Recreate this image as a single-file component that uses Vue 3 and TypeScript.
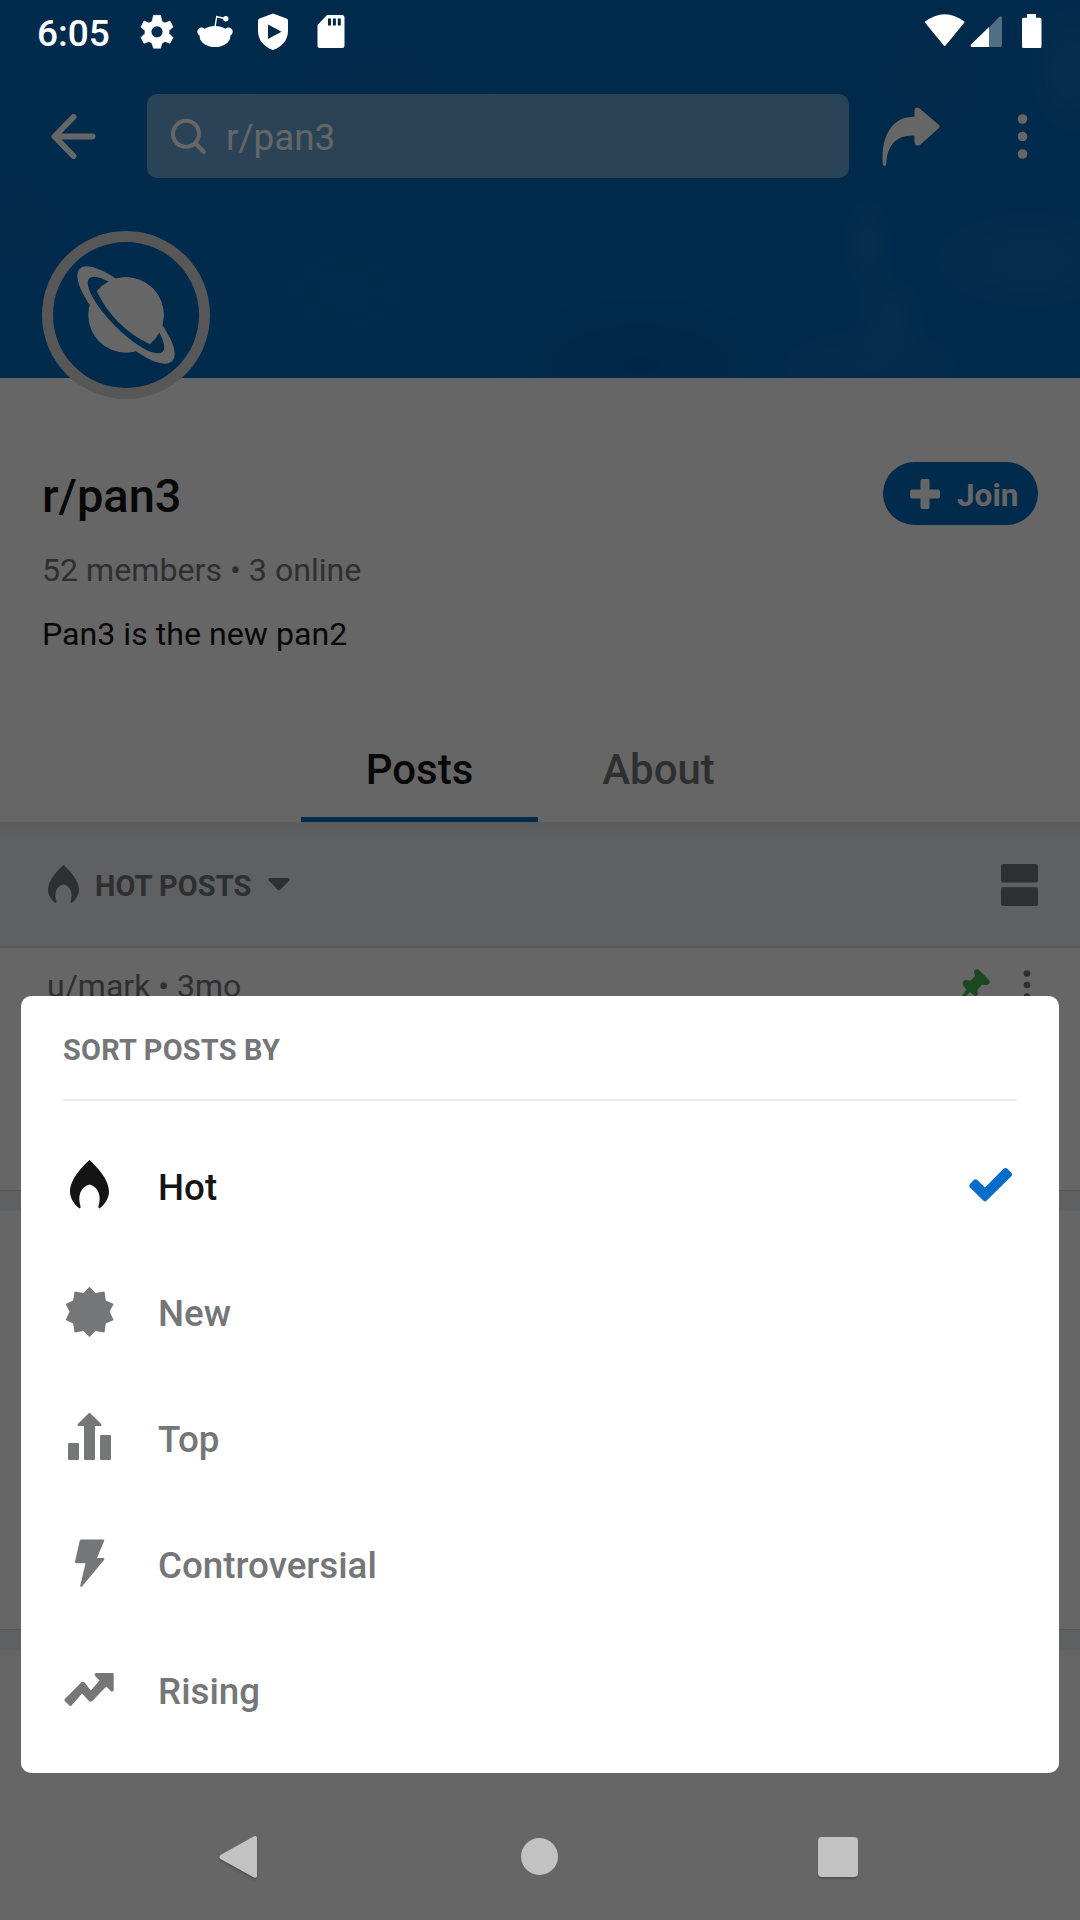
<script setup lang="ts">
import { ref } from 'vue'

interface SortOption {
  id: 'hot' | 'new' | 'top' | 'controversial' | 'rising'
  label: string
  path: string
}

const flame =
  'M26.5 3C33 9 46 22 46 34.500C46 42 41 48 36.500 51.500Q35 51 35.500 49C38.500 40 36 30 26.500 27.500C17 30 14.500 40 17.500 49Q18 51 16.500 51.500C12 48 7 42 7 34.500C7 22 20 9 26.500 3Z'

const options: SortOption[] = [
  { id: 'hot', label: 'Hot', path: flame },
  {
    id: 'new',
    label: 'New',
    path: 'M26.500 1.700L32.500 8L41.500 6.500L42.800 15.500L50.700 19L46.500 26.800L50.700 35L42.800 38.500L41.500 47.500L32.500 46L26.500 52L20.500 46L11.500 47.500L10.200 38.500L2.700 35L6.500 26.800L2.700 19L10.200 15.500L11.500 6.500L20.500 8Z',
  },
  {
    id: 'top',
    label: 'Top',
    path: 'M6.200 32H14.800Q16 32 16 33.200V47.800Q16 49 14.800 49H6.200Q5 49 5 47.800V33.200Q5 32 6.200 32ZM38.200 24H46.800Q48 24 48 25.200V47.800Q48 49 46.800 49H38.200Q37 49 37 47.800V25.200Q37 24 38.200 24ZM27.300 2.300L38.200 13Q39 15 37 15H32V47.800Q32 49 30.800 49H22.200Q21 49 21 47.800V15H16Q14 15 14.800 13L25.700 2.300Q26.500 1.500 27.300 2.300Z',
  },
  {
    id: 'controversial',
    label: 'Controversial',
    path: 'M18 2.500H40.500Q41.700 2.500 41.200 3.800L34 21H40.500Q42 21.200 41.200 22.800L19 49.500Q17.500 50.500 17.200 49L22.500 26.200H13Q11.800 26 12 24.500L16.800 3.500Q17 2.500 18 2.500Z',
  },
  {
    id: 'rising',
    label: 'Rising',
    path: 'M33 10H49.500Q50.700 10 50.700 11.200V27Q50 29.500 48.300 28.500L43.300 23.500L29.500 37.800Q27.500 39.500 25.700 37.800L19 30.500L8.500 42.500Q7.500 43.500 6.500 42.500L1.800 38Q1 37 1.800 36L18 19.700Q20 18 21.800 19.700L27.800 27.500L36.500 17.500L32.200 13Q30.800 10.700 33 10Z',
  },
]

const selected = ref<SortOption['id']>('hot')
const tabs = ['Posts', 'About']
const activeTab = ref('Posts')
</script>

<template>
  <div class="screen">
    <main class="page">
      <header class="banner">
        <div class="toolbar">
          <svg class="back" viewBox="51 114 45 45">
            <path d="M92.500 136.500H55M73.500 117L54.500 136.500L73.500 156" fill="none" stroke="#fff" stroke-width="6" stroke-linecap="round" stroke-linejoin="round" />
          </svg>
          <div class="search">
            <svg viewBox="171 117 36 37">
              <circle cx="186" cy="132.800" r="13" fill="none" stroke="#fff" stroke-width="4" />
              <path d="M195.500 142.500L204 151" stroke="#fff" stroke-width="4" stroke-linecap="round" />
            </svg>
            <span>r/pan3</span>
          </div>
          <svg class="share" viewBox="881 106.500 60 60">
            <path d="M914.500 116.300V110Q915 106 919 107.500L939 124.500Q940.500 126 939 127.500L920 144.500Q915.500 146.500 914.500 142V135.200C896 134 887 146 886.300 163Q886 165.500 884.500 165.500Q883 165.500 882.700 163C881 134 893 116 914.500 116.300Z" fill="#fff" />
          </svg>
          <svg class="more" viewBox="1017 113 11 47">
            <circle cx="1022.500" cy="119" r="4.800" fill="#fff" /><circle cx="1022.500" cy="136.500" r="4.800" fill="#fff" /><circle cx="1022.500" cy="154" r="4.800" fill="#fff" />
          </svg>
        </div>
        <svg class="avatar" viewBox="-84 -84 168 168">
          <circle r="84" fill="#dadada" />
          <circle r="73" fill="#006cc0" />
          <g transform="rotate(45)">
            <ellipse rx="65.400" ry="21.500" fill="#fff" />
            <circle r="37.700" fill="#fff" />
            <ellipse rx="51.800" ry="15.500" fill="#006cc0" />
            <path d="M-37.500 3.800Q0 17 37.500 3.800A37.700 37.700 0 1 0 -37.500 3.800Z" fill="#fff" />
          </g>
        </svg>
      </header>

      <section class="info">
        <div class="title-row">
          <h1>r/pan3</h1>
          <button class="join">
            <svg viewBox="0 0 30 30"><path d="M12.500 0H17.500Q19.500 0 19.500 2V10.500H28Q30 10.500 30 12.500V17.500Q30 19.500 28 19.500H19.500V28Q19.500 30 17.500 30H12.500Q10.500 30 10.500 28V19.500H2Q0 19.500 0 17.500V12.500Q0 10.500 2 10.500H10.500V2Q10.500 0 12.500 0Z" fill="#fff" /></svg>
            <span>Join</span>
          </button>
        </div>
        <p class="meta">52 members • 3 online</p>
        <p class="desc">Pan3 is the new pan2</p>
      </section>

      <nav class="tabs">
        <span v-for="tab in tabs" :key="tab" class="tab" :class="{ active: tab === activeTab }">{{ tab }}</span>
      </nav>

      <div class="sortbar">
        <svg class="flame" viewBox="7 3 39 48.500" preserveAspectRatio="none"><path :d="flame" fill="#747678" /></svg>
        <span>HOT POSTS</span>
        <svg class="caret" viewBox="0 0 22 13"><path d="M2 0H20Q22.500 .5 21 2.800L12.500 11.500Q11 13 9.500 11.500L1 2.800Q-.5 .5 2 0Z" fill="#747678" /></svg>
        <svg class="layout" viewBox="0 0 37 42"><rect width="37" height="18.500" rx="2" fill="#747678" /><rect y="23.300" width="37" height="18.700" rx="2" fill="#747678" /></svg>
      </div>

      <article class="post first">
        <span>u/mark • 3mo</span>
        <svg class="pin" viewBox="958 968 32 36">
          <path d="M974 972.500Q974 968 978.500 969.500L989.300 980.300Q991 983.500 987 985Q983 985 982 984.500L977.500 990L978 994Q976.500 997 974 995.500L970 992L960 1002L959 1000L966.500 989.500L963 985.500Q961.500 981 965 980L970.500 980.500L975 976Z" fill="#46b554" />
        </svg>
        <svg class="post-more" viewBox="1023 969 8 32"><circle cx="1027" cy="973.500" r="3.300" fill="#747678" /><circle cx="1027" cy="985" r="3.300" fill="#747678" /><circle cx="1027" cy="996.500" r="3.300" fill="#747678" /></svg>
      </article>
      <div class="gap"></div>
      <article class="post second"></article>
      <div class="gap"></div>
      <article class="post third"></article>
      <div class="scrim"></div>
    </main>

    <div class="status">
      <span class="time">6:05</span>
      <svg class="slot" viewBox="128 6 58 50">
        <path fill-rule="evenodd" fill="#fff" stroke="#fff" stroke-width=".6" stroke-linejoin="round" d="M153.500 15.300H160.500L162 21.500L165 23L170 21L173 27L169 30.500V33.500L173 37.500L170 43.300L165 41.500L162 43.200L160.500 48.200H153.500L152 43.200L149 41.500L144 43.300L141 37.500L145 33.500V30.500L141 27L144 21L149 23L152 21.500ZM157 25.900A5.900 5.900 0 1 0 157 37.700A5.900 5.900 0 1 0 157 25.900Z" />
      </svg>
      <svg class="slot" viewBox="186 6 58 50" fill="#fff">
        <ellipse cx="215" cy="36.500" rx="15.300" ry="10.600" /><circle cx="201.500" cy="31.700" r="4.200" /><circle cx="228.500" cy="31.700" r="4.200" /><circle cx="225.800" cy="18.700" r="2.700" />
        <path d="M215 27L216.700 16.700L225 18.500" fill="none" stroke="#fff" stroke-width="1.400" />
      </svg>
      <svg class="slot" viewBox="244 6 58 50">
        <path fill-rule="evenodd" fill="#fff" d="M273 13.500L286.500 18.500Q288 19 288 20.500V31C288 40 282 47 273 50C264 47 258 40 258 31V20.500Q258 19 259.500 18.500ZM268 24.500V39L281.500 31.700Z" />
      </svg>
      <svg class="slot" viewBox="302 6 58 50">
        <path fill-rule="evenodd" fill="#fff" d="M327 15H342Q344.500 15 344.500 17.500V45.500Q344.500 48 342 48H320Q317.500 48 317.500 45.500V25ZM328 18.500V25.500H331V18.500ZM332.900 18.500V25.500H335.900V18.500ZM337.800 18.500V25.500H340.800V18.500Z" />
      </svg>
      <svg class="wifi" viewBox="924 14 41 33"><path d="M924.500 22Q944.800 6.500 964.800 22L946 45Q944.700 47 943.400 45Z" fill="#fff" /></svg>
      <svg class="signal" viewBox="970 15 33 33"><path d="M989 27.500L999 17Q1002 15 1002 18V45Q1002 47 1000 47H989Z" fill="#fff" opacity=".32" /><path d="M989 27V47H972Q970 46.500 971 44.500Z" fill="#fff" /></svg>
      <svg class="battery" viewBox="1022 14 20 34"><path d="M1027 14H1036V17.700H1040Q1041.500 17.700 1041.500 19.200V46.500Q1041.500 48 1040 48H1023.500Q1022 48 1022 46.500V19.200Q1022 17.700 1023.500 17.700H1027Z" fill="#fff" /></svg>
    </div>

    <section class="sheet">
      <h2>SORT POSTS BY</h2>
      <ul>
        <li v-for="option in options" :key="option.id" :class="{ selected: option.id === selected }">
          <svg class="icon" viewBox="0 0 53 53"><path :d="option.path" fill="currentColor" /></svg>
          <span>{{ option.label }}</span>
          <svg v-if="option.id === selected" class="check" viewBox="969 1167 43 35">
            <path d="M973.800 1180Q975.500 1178.500 977.200 1180L985 1187.500L1003.500 1168.800Q1005.500 1167 1007.500 1168.800L1011.300 1172.700Q1013 1174.500 1011.300 1176.300L986.500 1200.700Q985 1202.300 983.500 1200.700L970 1187.500Q968.500 1185.800 970 1184Z" fill="#006dca" />
          </svg>
        </li>
      </ul>
    </section>

    <div class="nav">
      <svg viewBox="219 1833 39 48"><path d="M220.500 1855L254 1836.300Q257 1835.500 257 1838V1876Q257 1878.500 254 1877.500L220.500 1859Q218.500 1857 220.500 1855Z" fill="#c2c2c2" /></svg>
      <i class="home"></i>
      <i class="recent"></i>
    </div>
  </div>
</template>

<style>
html,
body {
  margin: 0;
  background: #666;
}
</style>

<style scoped>
.screen {
  position: relative;
  width: 1080px;
  height: 1920px;
  overflow: hidden;
  font-family: Roboto, sans-serif;
}
svg {
  display: block;
  flex: none;
}
h1,
h2,
p,
ul {
  margin: 0;
  padding: 0;
}
.page {
  height: 1920px;
  background: #fff;
  color: #141414;
}
.scrim {
  position: absolute;
  inset: 0;
  background: rgba(0, 0, 0, 0.6);
}
.banner {
  box-sizing: border-box;
  height: 378px;
  padding-top: 63px;
  background:
    radial-gradient(ellipse 32px 60px at 868px 245px, rgba(90, 150, 200, 0.2), transparent),
    radial-gradient(ellipse 45px 50px at 890px 315px, rgba(90, 150, 200, 0.18), transparent),
    radial-gradient(ellipse 120px 60px at 1030px 260px, rgba(100, 140, 200, 0.2), transparent),
    radial-gradient(ellipse 110px 45px at 870px 365px, rgba(90, 130, 190, 0.22), transparent),
    radial-gradient(ellipse 50px 80px at 1070px 70px, rgba(90, 140, 190, 0.22), transparent),
    radial-gradient(ellipse 150px 70px at 640px 365px, rgba(0, 70, 120, 0.22), transparent),
    radial-gradient(ellipse 130px 100px at 345px 290px, rgba(10, 130, 200, 0.18), transparent),
    radial-gradient(ellipse 100px 120px at 930px 80px, rgba(0, 80, 160, 0.18), transparent),
    radial-gradient(ellipse 160px 110px at 370px 90px, rgba(0, 80, 160, 0.16), transparent),
    radial-gradient(ellipse 80px 90px at 20px 230px, rgba(0, 80, 160, 0.2), transparent),
    #006bbe;
}
.toolbar {
  display: flex;
  align-items: center;
  height: 147px;
}
.back {
  width: 45px;
  height: 45px;
  margin-left: 51px;
}
.search {
  display: flex;
  align-items: center;
  box-sizing: border-box;
  width: 702px;
  height: 84px;
  margin: 0 32px 1px 51px;
  padding-left: 24px;
  border-radius: 10px;
  background: rgba(255, 255, 255, 0.41);
  color: #fff;
  font-size: 36.75px;
}
.search svg {
  width: 36px;
  height: 37px;
}
.search span {
  margin-left: 19px;
  line-height: 42px;
  padding-top: 4px;
}
.share {
  width: 60px;
  height: 60px;
}
.more {
  width: 11px;
  height: 47px;
  margin-left: 76px;
}
.avatar {
  width: 168px;
  height: 168px;
  margin: 21px 0 0 42px;
}
.info {
  padding: 84px 42px 0;
}
.title-row {
  display: flex;
  justify-content: space-between;
  height: 63px;
}
h1 {
  font-size: 47px;
  font-weight: 500;
  line-height: 63px;
  padding-top: 2px;
}
.join {
  display: flex;
  align-items: center;
  width: 155px;
  height: 63px;
  padding: 0 0 0 27px;
  border: 0;
  border-radius: 32px;
  background: #006cc0;
  color: #fff;
  font: 700 31.5px/42px Roboto, sans-serif;
}
.join svg {
  width: 30px;
  height: 30px;
}
.join span {
  margin-left: 17px;
  padding-top: 4px;
}
.meta,
.desc {
  font-size: 32.15px;
  line-height: 42px;
}
.meta {
  margin-top: 24px;
  color: #747678;
}
.desc {
  margin-top: 22px;
}
.tabs {
  display: flex;
  justify-content: center;
  height: 105px;
  margin-top: 62px;
}
.tab {
  box-sizing: border-box;
  width: 241px;
  height: 105px;
  line-height: 105px;
  text-align: center;
  font-size: 42px;
  font-weight: 500;
  color: #747678;
}
.tab.active {
  width: 237px;
  color: #141414;
  border-bottom: 5px solid #006cc0;
}
.sortbar {
  display: flex;
  align-items: center;
  box-sizing: border-box;
  height: 126px;
  padding: 0 42px 0 47.5px;
  border-bottom: 2px solid #e0e2e7;
  background: linear-gradient(#e5e5e6, #edeff4 12px);
  color: #747678;
  font-size: 28.9px;
  font-weight: 700;
}
.flame {
  width: 31px;
  height: 38px;
}
.sortbar span {
  margin-left: 16.5px;
  padding-top: 3px;
  line-height: 42px;
  letter-spacing: 0.1px;
}
.caret {
  width: 22px;
  height: 13px;
  margin: 1px 0 0 17px;
}
.layout {
  width: 37px;
  height: 42px;
  margin: 2px 0 0 auto;
}
.post {
  box-sizing: border-box;
  background: #fff;
}
.post.first {
  display: flex;
  height: 242px;
  padding: 17px 49px 0 47px;
  color: #747678;
  font-size: 32px;
  line-height: 42px;
}
.pin {
  width: 32px;
  height: 36px;
  margin: 3px 33px 0 auto;
}
.post-more {
  width: 8px;
  height: 32px;
  margin-top: 4px;
}
.gap {
  box-sizing: border-box;
  height: 21px;
  border-top: 1px solid #d8dadd;
  background: #edeff4;
}
.post.second {
  height: 418px;
}
.post.third {
  height: 249px;
  border-top: 6px solid #f9f9f9;
}
.status {
  position: absolute;
  top: 0;
  left: 0;
  display: flex;
  box-sizing: border-box;
  width: 1080px;
  height: 63px;
  padding: 6px 38px 0 37px;
}
.time {
  width: 91px;
  color: #fff;
  font-size: 37px;
  font-weight: 500;
  line-height: 55px;
}
.slot {
  width: 58px;
  height: 50px;
}
.wifi {
  width: 41px;
  height: 33px;
  margin: 8px 5px 0 auto;
}
.signal {
  width: 33px;
  height: 33px;
  margin: 9px 19px 0 0;
}
.battery {
  width: 20px;
  height: 34px;
  margin-top: 8px;
}
.sheet {
  position: absolute;
  top: 996px;
  left: 21px;
  box-sizing: border-box;
  width: 1038px;
  height: 777px;
  padding: 0 42px;
  border-radius: 10px;
  background: #fff;
  color: #747678;
}
h2 {
  box-sizing: border-box;
  height: 105px;
  border-bottom: 2px solid #eaeaea;
  font-size: 28.9px;
  font-weight: 700;
  line-height: 108px;
  letter-spacing: 0.22px;
}
ul {
  padding-top: 21px;
  list-style: none;
}
li {
  display: flex;
  align-items: center;
  height: 126px;
  font-size: 36.75px;
  font-weight: 500;
}
.icon {
  width: 53px;
  height: 53px;
}
li span {
  margin-left: 42px;
  padding-top: 5px;
}
li.selected {
  color: #141414;
}
li.selected .icon {
  margin-bottom: 4px;
}
.check {
  width: 43px;
  height: 35px;
  margin: 0 5px 2px auto;
}
.nav {
  position: absolute;
  bottom: 0;
  left: 0;
  display: flex;
  align-items: center;
  width: 1080px;
  height: 127px;
}
.nav svg {
  width: 39px;
  height: 48px;
  margin-left: 219px;
  filter: drop-shadow(0 2px 1px rgba(0, 0, 0, 0.2));
}
.home {
  width: 37px;
  height: 37px;
  margin-left: 263px;
  border-radius: 50%;
  background: #c2c2c2;
}
.recent {
  width: 40px;
  height: 40px;
  margin-left: 260px;
  border-radius: 4px;
  background: #c2c2c2;
  box-shadow: 0 2px 2px rgba(0, 0, 0, 0.2);
}
</style>
